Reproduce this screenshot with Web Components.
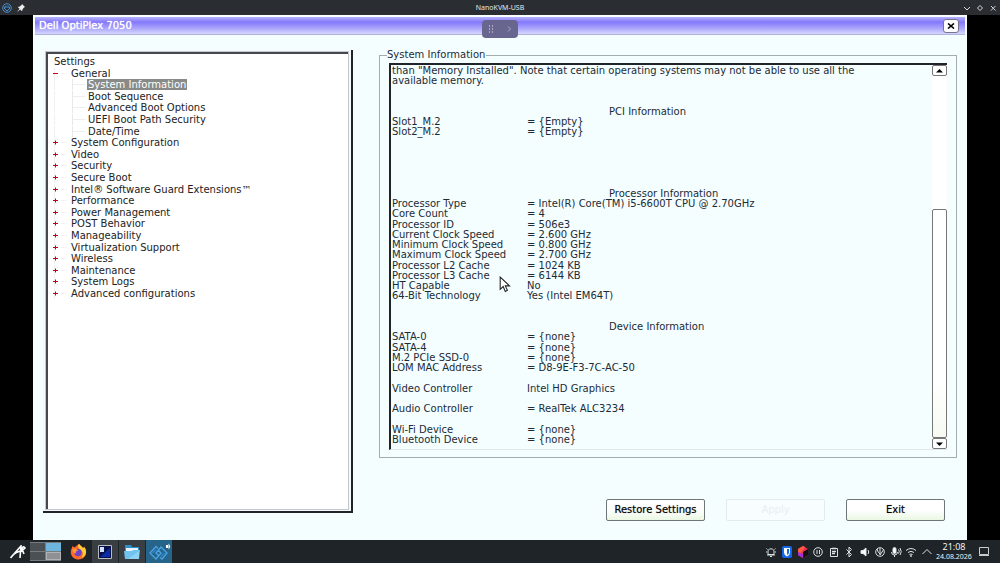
<!DOCTYPE html>
<html lang="en">
<head>
<meta charset="utf-8">
<title>NanoKVM-USB</title>
<style>
html,body{margin:0;height:100%;background:#000;overflow:hidden}
body{font:10px/10px "DejaVu Sans",sans-serif;color:#1c2b36}
</style>
</head>
<body>
<kvm-desktop></kvm-desktop>
<script>
const define=(name,html,setup)=>customElements.define(name,class extends HTMLElement{
  connectedCallback(){
    if(this.shadowRoot)return;
    const t=document.createElement('template');
    t.innerHTML=html;
    this.attachShadow({mode:'open'}).append(t.content.cloneNode(true));
    if(setup)setup(this,this.shadowRoot);
  }
});

define('window-bar',`
<style>
:host{display:grid;grid-template-columns:1fr auto 1fr;align-items:center;height:15px;flex:none;background:#2a2e32;color:#e6e8ea;font:7px/15px "Noto Sans",sans-serif}
.l{display:flex;gap:4px;padding-left:2px;align-items:center}
.r{display:flex;justify-content:flex-end;gap:3px;padding-right:2px}
button{all:unset;display:flex;width:10px;height:10px}
svg{width:10px;height:10px;fill:none;stroke:#d5d8da}
</style>
<div class="l">
<svg viewBox="0 0 10 10" style="stroke:#4a8fce"><circle cx="5" cy="5" r="4.3"/><path d="M4 2.5 2 5l3 3M6 2.5 8 5 5 8M3.5 5 5 3.5 6.5 5"/></svg>
<svg viewBox="0 0 10 10" style="fill:#eee;stroke:none"><path d="m6 1 3 3-1 .4-1.4 1.8L6 8.3 4.2 6.6 1 9.2 3.5 5.8 1.8 4l2-.6L5.600 2z"/></svg>
</div>
<span><slot></slot></span>
<div class="r">
<button aria-label="Minimize"><svg viewBox="0 0 10 10"><path d="m2 4 3 3 3-3"/></svg></button>
<button aria-label="Maximize"><svg viewBox="0 0 10 10"><path d="m5 2.500 2.500 2.500L5 7.500 2.500 5z"/></svg></button>
<button aria-label="Close"><svg viewBox="0 0 10 10"><path d="m3 3 4.500 4.500M7.500 3 3 7.500"/></svg></button>
</div>`);

define('bios-header',`
<style>
:host{display:flex;align-items:center;justify-content:space-between;height:17px;margin:0 2px;padding:0 6px 0 4px;background:linear-gradient(#b9b2ff,#8378fb 30%,#a9a3fb 65%,#d6d6fd);border-bottom:1px solid #b0b4dc;color:#fff;text-shadow:0 0 1px #fff}
button{all:unset;box-sizing:border-box;width:16px;height:14px;border:1px solid #77758c;border-radius:3px;background:#fff;display:flex;align-items:center;justify-content:center}
svg{width:8px;height:6px;stroke:#000;stroke-width:1.600;fill:none}
</style>
<span><slot></slot></span>
<button aria-label="Close"><svg viewBox="0 0 8 6"><path d="m1 .5 6 5M7 .5l-6 5"/></svg></button>`);

define('tree-item',`
<style>
:host{display:flex;height:11px;line-height:11px;padding-left:1px;color:#222;white-space:nowrap}
:host([level="1"]){background:linear-gradient(#f0f0f0,#f0f0f0) 1px 0/1px 100% no-repeat,linear-gradient(#f4f4f4,#f4f4f4) 8px 5px/6px 1px no-repeat}
:host([level="2"]){padding-left:34px;background:linear-gradient(#f0f0f0,#f0f0f0) 1px 0/1px 100% no-repeat,linear-gradient(#e8e8e8,#e8e8e8) 19px 0/1px 100% no-repeat,linear-gradient(#eee,#eee) 19px 5px/13px 1px no-repeat}
:host([level="0"]){padding:0}
svg{display:none;width:5px;height:5px;flex:none;margin:3px 12px 0 -1px;stroke:#c00020;fill:none}
:host([level="1"]) svg{display:block}
:host([open]) .v{display:none}
span{padding:0 1px}
:host([selected]) span{background:#888a88;color:#fff}
</style>
<svg viewBox="0 0 5 5"><path d="M0 2.500h5"/><path class="v" d="M2.500 0.500v4"/></svg><span><slot></slot></span>`,
host=>{host.setAttribute('role','treeitem')});

define('settings-tree',`
<style>
:host{display:flex;box-sizing:border-box;padding:2px 3px;border-right:2px solid #202428;border-bottom:2px solid #202428;background:#f5faff}
.well{flex:1;border-left:2px solid #45484c;border-top:2px solid #45484c;outline:1px solid #c4c8cc;background:#fff;padding:2px 5px}
.list{display:flex;flex-direction:column;justify-content:space-between;height:243px}
</style>
<div class="well"><div class="list" role="tree" aria-label="Settings"><slot></slot></div></div>`);

define('spec-table',`
<style>
:host{display:flex;flex:1;min-width:0}
table,tbody{display:flex;flex-direction:column;flex:1}
tr{display:flex;flex:1 0 0}
tr.gap2{flex-grow:2}tr.gap5{flex-grow:5}
th,td{padding:0;font-weight:400;text-align:left;white-space:nowrap}
th[scope=row]{width:135px;flex:none}
th[scope=col]{padding-left:217px}
</style>
<table><tbody></tbody></table>`,(host,root)=>{
  const body=root.querySelector('tbody');
  const row=(cells,cls)=>{
    const tr=document.createElement('tr');
    if(cls)tr.className=cls;
    cells.forEach(c=>tr.append(c));
    body.append(tr);
  };
  const cell=(tag,text,scope)=>{
    const c=document.createElement(tag);
    c.textContent=text;
    if(scope)c.scope=scope;
    return c;
  };
  const data=[
    {note:'than "Memory Installed". Note that certain operating systems may not be able to use all the'},
    {note:'available memory.'},2,
    {head:'PCI Information'},['Slot1_M.2','= {Empty}'],['Slot2_M.2','= {Empty}'],5,
    {head:'Processor Information'},
    ['Processor Type','= Intel(R) Core(TM) i5-6600T CPU @ 2.70GHz'],
    ['Core Count','= 4'],['Processor ID','= 506e3'],
    ['Current Clock Speed','= 2.600 GHz'],['Minimum Clock Speed','= 0.800 GHz'],['Maximum Clock Speed','= 2.700 GHz'],
    ['Processor L2 Cache','= 1024 KB'],['Processor L3 Cache','= 6144 KB'],
    ['HT Capable','No'],['64-Bit Technology','Yes (Intel EM64T)'],2,
    {head:'Device Information'},
    ['SATA-0','= {none}'],['SATA-4','= {none}'],['M.2 PCIe SSD-0','= {none}'],['LOM MAC Address','= D8-9E-F3-7C-AC-50'],1,
    ['Video Controller','Intel HD Graphics'],1,
    ['Audio Controller','= RealTek ALC3234'],1,
    ['Wi-Fi Device','= {none}'],['Bluetooth Device','= {none}']
  ];
  for(const d of data){
    if(typeof d==='number')row([],'gap'+d);
    else if(d.note)row([cell('td',d.note)]);
    else if(d.head)row([cell('th',d.head,'col')]);
    else row([cell('th',d[0],'row'),cell('td',d[1])]);
  }
});

define('scroll-rail',`
<style>
:host{display:flex;flex-direction:column;width:15px;flex:none;background:#fff}
button,.thumb{all:unset;box-sizing:border-box;border:1px solid #777;border-radius:2px;background:#fff}
button{height:11px;display:flex;align-items:center;justify-content:center;flex:none}
svg{width:7px;height:4px;fill:#000}
.space{flex:135}
.thumb{flex:230;background:linear-gradient(#fff 75%,#f6faf2)}
</style>
<button aria-label="Scroll up"><svg viewBox="0 0 7 4"><path d="M3.500 0 7 3.500H0z"/></svg></button>
<div class="space"></div><div class="thumb"></div>
<button aria-label="Scroll down"><svg viewBox="0 0 7 4"><path d="M0 .5h7L3.500 4z"/></svg></button>`);

define('info-panel',`
<style>
:host{display:flex;min-width:0}
fieldset{flex:1;display:flex;min-width:0;margin:0;border:1px solid #a4acb0;padding:3px 9px 7px}
legend{padding:0 1px 0 0;margin-left:-2px;line-height:10px;white-space:nowrap}
.box{flex:1;display:flex;min-width:0;border-top:2px solid #20242a;border-left:2px solid #20242a;border-bottom:1px solid #e0e8ea}
.text{flex:1;display:flex;padding:1px 0 4px 1px}
</style>
<fieldset><legend>System Information</legend>
<div class="box"><div class="text"><slot></slot></div><scroll-rail></scroll-rail></div></fieldset>`);

define('bios-button',`
<style>
:host{display:block;width:99px}
button{box-sizing:border-box;width:100%;height:22px;padding:0;border:1px solid #6f7674;border-radius:2px;background:linear-gradient(#fff 50%,#eaf7e2);font:inherit;color:#000;text-shadow:0 0 1px #888;white-space:nowrap}
button:disabled{border-color:#e4ebeb;background:#f8feff;color:#e8eeee;text-shadow:none}
</style>
<button><slot></slot></button>`,(h,r)=>{r.querySelector('button').disabled=h.hasAttribute('disabled')});

define('kvm-pill',`
<style>
:host{position:absolute;left:50%;top:4px;margin-left:-18px;width:36px;height:18px;border-radius:4px;background:#68668e;display:flex;align-items:center;justify-content:space-around}
svg{width:8px;height:8px;fill:#aaa8c4;stroke:none}
</style>
<svg viewBox="0 0 8 8"><path d="M2 0h1v2H2zM5 0h1v2H5zM2 3h1v2H2zM5 3h1v2H5zM2 6h1v2H2zM5 6h1v2H5z"/></svg>
<svg viewBox="0 0 8 8" style="fill:none;stroke:#aaa8c4"><path d="m3 1.500 2.500 2.500L3 6.500"/></svg>`);

define('mouse-pointer',`
<style>:host{position:absolute;left:466px;top:260px;width:13px;height:17px}svg{display:block}</style>
<svg width="13" height="17" viewBox="0 0 12 16"><path d="M1 1v11.500l2.800-2.600 2 4.600 2-1-2-4.200h4z" fill="#fff" stroke="#222"/></svg>`);

define('bios-screen',`
<style>
:host{position:relative;display:flex;flex-direction:column;flex:1;min-height:0;box-sizing:border-box;margin:0 33px;padding-top:1px;background:#f4feff;border-top:1px solid #fff}
.cols{flex:1;min-height:0;display:grid;grid-template-columns:310fr 578fr;gap:26px;padding:15px 10px 27px}
.right{display:flex;flex-direction:column;min-width:0}
info-panel{flex:1}
.buttons{display:flex;justify-content:flex-end;gap:21px;padding:41px 12px 0 0;margin-bottom:-8px}
</style>
<bios-header>Dell OptiPlex 7050</bios-header>
<kvm-pill></kvm-pill>
<div class="cols">
<settings-tree>
<tree-item level="0">Settings</tree-item>
<tree-item level="1" open>General</tree-item>
<tree-item level="2" selected>System Information</tree-item>
<tree-item level="2">Boot Sequence</tree-item>
<tree-item level="2">Advanced Boot Options</tree-item>
<tree-item level="2">UEFI Boot Path Security</tree-item>
<tree-item level="2">Date/Time</tree-item>
<tree-item level="1">System Configuration</tree-item>
<tree-item level="1">Video</tree-item>
<tree-item level="1">Security</tree-item>
<tree-item level="1">Secure Boot</tree-item>
<tree-item level="1">Intel® Software Guard Extensions™</tree-item>
<tree-item level="1">Performance</tree-item>
<tree-item level="1">Power Management</tree-item>
<tree-item level="1">POST Behavior</tree-item>
<tree-item level="1">Manageability</tree-item>
<tree-item level="1">Virtualization Support</tree-item>
<tree-item level="1">Wireless</tree-item>
<tree-item level="1">Maintenance</tree-item>
<tree-item level="1">System Logs</tree-item>
<tree-item level="1">Advanced configurations</tree-item>
</settings-tree>
<div class="right">
<info-panel><spec-table></spec-table></info-panel>
<div class="buttons"><bios-button>Restore Settings</bios-button><bios-button disabled>Apply</bios-button><bios-button>Exit</bios-button></div>
</div>
</div>
<mouse-pointer></mouse-pointer>`);

define('task-bar',`
<style>
:host{display:flex;justify-content:space-between;height:23px;flex:none;background:#1f2428;color:#f0f2f3;font-family:"Noto Sans",sans-serif}
.l,.r,.tray{display:flex;align-items:center}
button{all:unset;display:flex;align-items:center;justify-content:center;height:23px}
.app{width:26px;margin-right:1px}
.run{background:#393e43}.act{background:#276489}
.start{width:16px;margin:0 4px 0 10px}
.pager{display:grid;grid-template-columns:15px 15px;grid-auto-rows:8px;gap:1px;margin-right:4px;background:#777c80;border:solid #777c80;border-width:1px 0}
.pager i{background:#4b5054}.pager .on{background:#6fb6dc}.pager .w{background:#8e9194;box-shadow:inset 0 0 0 1px #b0b2b4}
.tray svg{width:12px;height:12px;flex:none;fill:none;stroke:#dfe2e4}
.tray button{width:15px}
.tray .wide{width:16px}
time{display:block;width:38px;margin:0 4px 0 1px;text-align:center;white-space:nowrap}
time b{display:block;font:9px/11px "Noto Sans",sans-serif}
time small{display:block;font:7px/10px "Noto Sans",sans-serif}
.show{width:14px;margin-right:9px}
</style>
<div class="l">
<button class="start" aria-label="Start"><svg width="16" height="14" viewBox="0 0 16 14" fill="none" stroke="#fff" stroke-width="1.600"><path d="M.5 13 11 1l-1 12M4 9c4-3 9-3 11-6-1-2-3-1-3 1l2 5" /></svg></button>
<div class="pager"><i></i><i class="on"></i><i></i><i class="w"></i></div>
<button class="app" aria-label="Firefox"><svg width="17" height="17" viewBox="0 0 17 17"><path d="M2.500 3 4.500 4.500 9 .8c1 2 4 3 4 5l1-2c2 2 2.500 5 2 7-1 4-4 5.700-7.500 5.700S1 14 .8 9.500C.7 7 1.800 5.500 2.500 3z" fill="#ff6a2a"/><path d="M9 .8c1 2 4 3 4 5l1-2c2 2 2.500 5 1.500 7.500-1 2-2 3-4 3.500 2-3 2-6-1-8S8 3 9 .8z" fill="#ffd038"/><circle cx="8" cy="9.500" r="3.700" fill="#7042c4"/><path d="M2.500 6c2-1 4 0 6 1.500-2 0-3 1-2.500 2.500-2 1-3.500-1-3.500-4z" fill="#ff9a2c"/></svg></button>
<button class="app run" aria-label="Terminal"><svg width="14" height="14" viewBox="0 0 14 14"><path d="M.5.5h13v13H.5z" fill="#07104a" stroke="#b9bcc0"/><path d="m2 12 10-9v9z" fill="#0b2aa8"/><path d="M2 2h4v5H2z" fill="#cfe0ff"/></svg></button>
<button class="app run" aria-label="Files"><svg width="16" height="14" viewBox="0 0 16 14"><path d="M1 0h6l1 2h7v5H1z" fill="#2f8fcb"/><path d="M2 3h12v4H2z" fill="#e8f4fb"/><path d="M0 6h8l1-1h7l-1 9H1z" fill="#6fc3ee"/><path d="m4 14 11-8v8z" fill="#8ed2f4"/></svg></button>
<button class="app act" aria-label="NanoKVM"><svg width="24" height="20" viewBox="0 0 24 20" fill="none" stroke="#4ba4e4" stroke-width="1.300"><path d="M11 6.500 9 4.500 3 11l6 6 5-6-3-3M13 15.500l2 1.500 5-6-6-6-5 6 3 3"/><path d="M5.500 11 9 7.500M17.500 11 14 14.500" stroke="#2b86d8"/><path d="M19 3h2v3h-2z" fill="#fff" stroke="none"/><path d="M21.500 1.500q3 3 0 6z" fill="#fff" stroke="none"/></svg></button>
</div>
<div class="r">
<div class="tray">
<button class="wide" aria-label="Notifications"><svg viewBox="0 0 12 12"><path d="M3 8.500V4.500Q6 1 9 4.500v4zM2 9h8M5 10.500h2M1.500 2.500l1 1M10.500 2.500l-1 1M1 6h1M10 6h1"/></svg></button>
<button class="wide" aria-label="Bitwarden"><svg viewBox="0 0 12 12" style="stroke:none"><rect x="1" width="10" height="12" rx="2" fill="#1667e8"/><path d="M3 2h6v4.500Q9 9 6 10.500 3 9 3 6.500z" fill="#fff"/><path d="M6 3h2v3.500Q8 8 6 9z" fill="#1667e8"/></svg></button>
<button aria-label="Toolbox"><svg viewBox="0 0 12 12" style="stroke:none"><path d="M1 3 6 0l5 3v6l-5 3-5-3z" fill="#e8305a"/><path d="M1 3 6 0l2 1-4 6-3 2z" fill="#ff5a3c"/><path d="m6 6 5-3v6l-5 3z" fill="#111"/><path d="m1 6 5 2v4L1 9z" fill="#a832d8"/></svg></button>
<button class="wide" aria-label="Pause"><svg viewBox="0 0 12 12"><circle cx="6" cy="6" r="4.300"/><path d="M5 4v4M7.500 4v4"/></svg></button>
<button aria-label="Clipboard"><svg viewBox="0 0 12 12"><path d="M2.500 2.500h7v8h-7z"/><path d="M4 2.500h4M4 5.500h4M4 7.500h3" stroke-width="1.500"/></svg></button>
<button class="wide" aria-label="Bluetooth"><svg viewBox="0 0 12 12"><path d="m3.500 3.500 5 5L6 11V1l2.500 2.500-5 5"/></svg></button>
<button aria-label="Volume"><svg viewBox="0 0 12 12"><path d="M2 4.500h2L7 2v8L4 7.500H2z" fill="#fff"/><path d="M9 4q1.500 2 0 4"/></svg></button>
<button class="wide" aria-label="Globe"><svg viewBox="0 0 12 12"><circle cx="6" cy="6" r="4.300"/><path d="M3 3q1 4 3 5M6 2v7l4-6"/></svg></button>
<button aria-label="Microphone"><svg viewBox="0 0 12 12"><rect x="3" y="1.500" width="3" height="6" rx="1.500" fill="#fff"/><path d="M1.500 6q0 3 3 3t3-3M4.500 9v2M8.500 3.500q1.500 2 0 4M10 2q2.500 4 0 7"/></svg></button>
<button class="wide" aria-label="Network"><svg viewBox="0 0 12 12"><path d="M1 4.500q5-4 10 0M3 6.500q3-2.500 6 0M4.500 8.500q1.500-1 3 0" /><circle cx="6" cy="10" r=".6"/></svg></button>
<button aria-label="Show hidden"><svg viewBox="0 0 12 12"><path d="m1.500 8 4.500-4.500L10.500 8"/></svg></button>
</div>
<time datetime="2026-08-24T21:08"><b>21:08</b><small>24.08.2026</small></time>
<button class="show" aria-label="Show desktop"><svg width="10" height="9" viewBox="0 0 10 9" fill="none" stroke="#c8cccf"><path d="M.5.5h9v7h-9z"/><path d="M0 8.500h10"/></svg></button>
</div>`);

define('kvm-desktop',`
<style>:host{display:flex;flex-direction:column;height:100vh;background:#000}</style>
<window-bar>NanoKVM-USB</window-bar>
<bios-screen></bios-screen>
<task-bar></task-bar>`);
</script>
</body>
</html>
